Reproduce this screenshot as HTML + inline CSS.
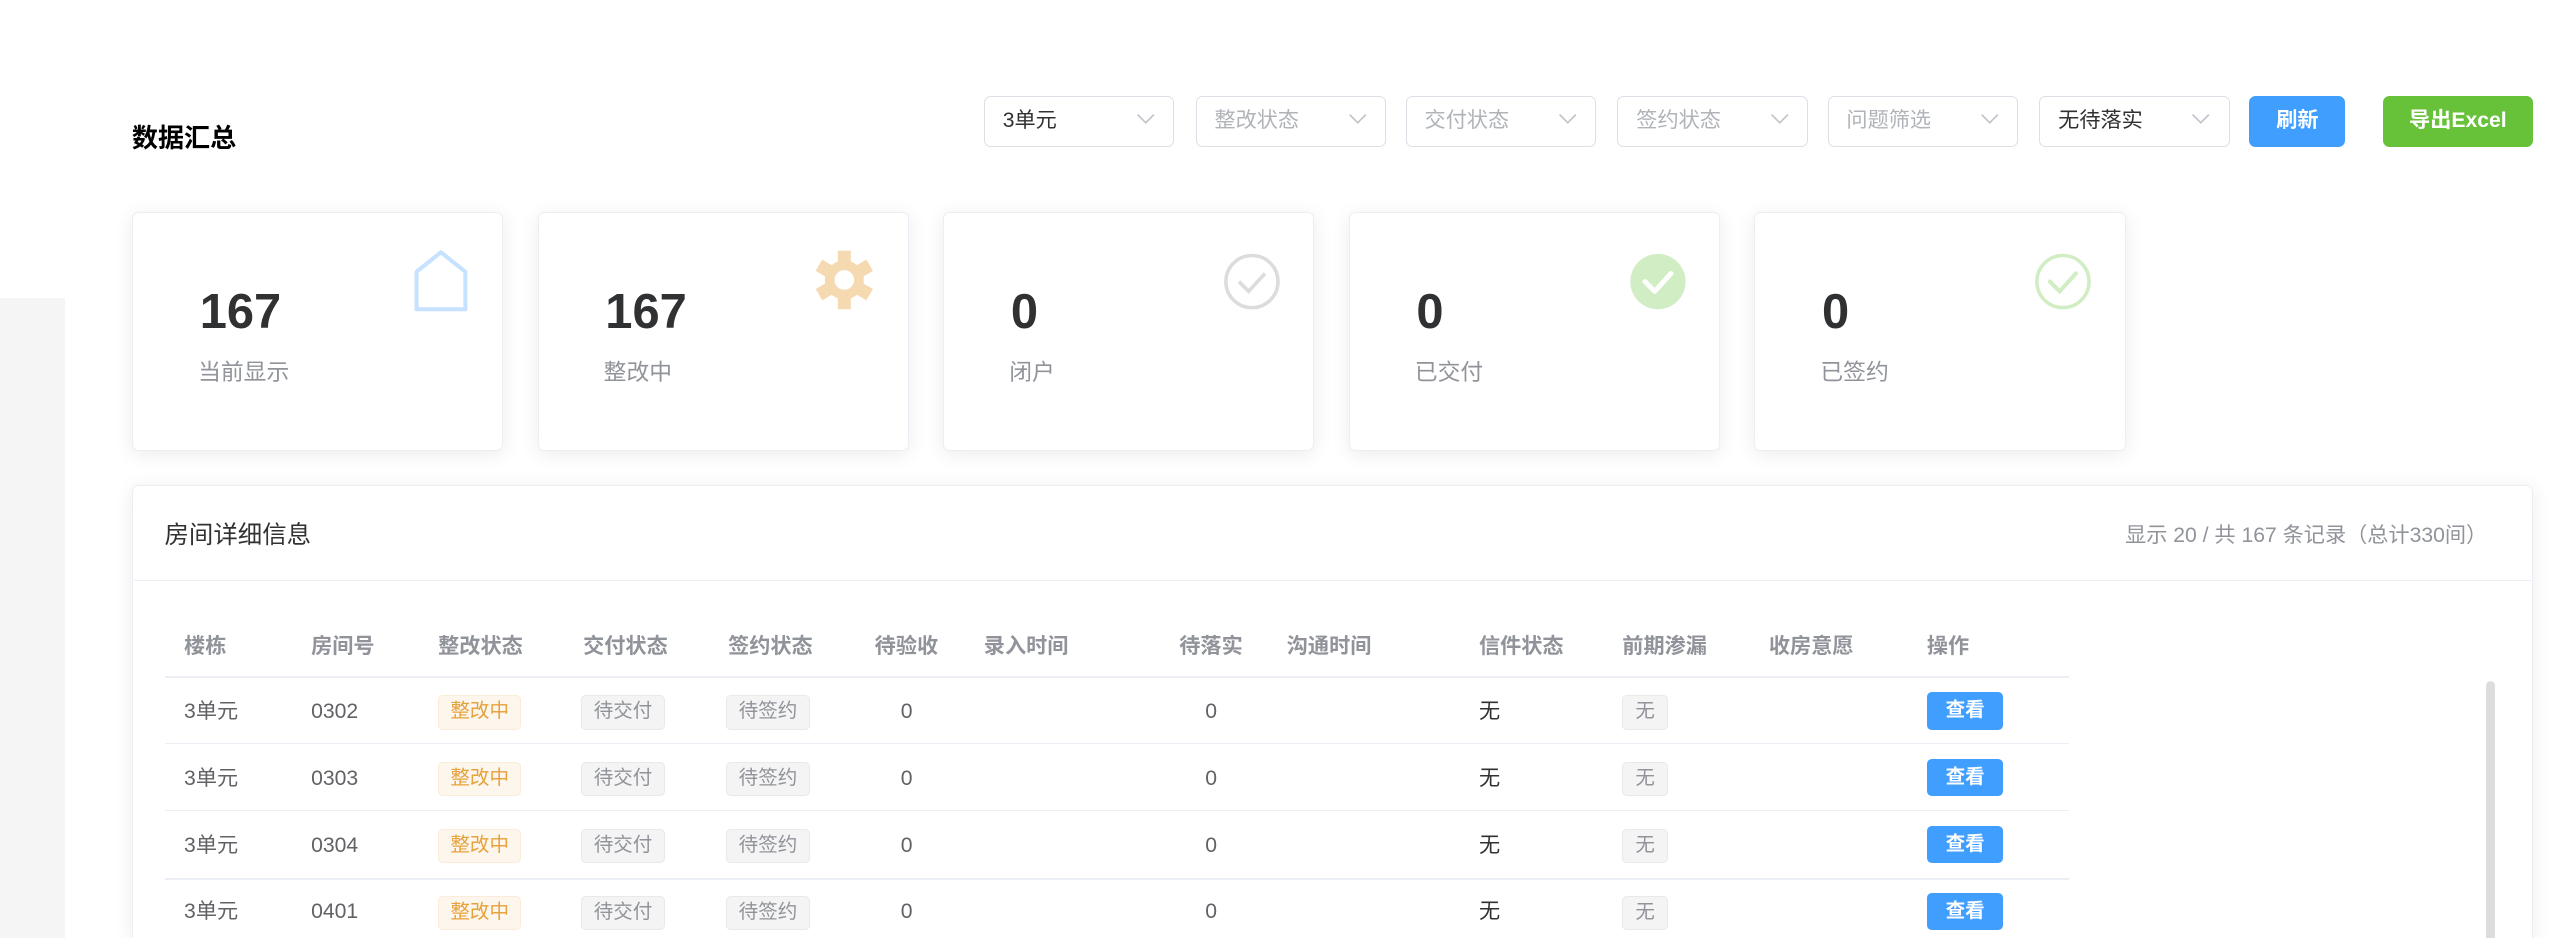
<!DOCTYPE html>
<html><head><meta charset="utf-8">
<style>
*{margin:0;padding:0;box-sizing:border-box}
html,body{width:2554px;height:938px;overflow:hidden;background:#fff}
#w{zoom:1.6288;width:1568px;height:576px;position:relative;font-family:"Liberation Sans","Noto Sans CJK SC",sans-serif;color:#606266;overflow:hidden}
.a{position:absolute;line-height:18px}
.strip{left:0;top:183px;width:40px;height:393px;background:#f5f5f5}
.title{left:81px;top:76px;font-size:16px;font-weight:bold;color:#000}
.sel{top:59px;height:31px;width:117px;border:1px solid #dcdfe6;border-radius:4px;font-size:13px;color:#b0b3b8;padding-left:11px;line-height:29px}
.sel.v{color:#303133}
.sel svg{position:absolute;right:11px;top:10px}
.btn{top:59px;height:31px;border-radius:4px;color:#fff;font-size:13px;line-height:31px;text-align:center;font-weight:bold}
.card{top:130px;width:228px;height:147px;border:1px solid #ebeef5;border-radius:4px;background:#fff;box-shadow:0 2px 12px rgba(0,0,0,.08)}
.num{position:absolute;left:41px;top:43px;font-size:30px;line-height:36px;font-weight:bold;color:#303133}
.lbl{position:absolute;left:40px;top:89px;font-size:14px;line-height:18px;color:#909399}
.card svg{position:absolute;left:170px;top:22px}
.panel{left:81px;top:298px;width:1474px;height:278px;border:1px solid #ebeef5;border-bottom:0;border-radius:4px 4px 0 0;box-shadow:0 2px 12px rgba(0,0,0,.08);background:#fff}
.ph{left:101px;top:320px;font-size:15px;color:#303133}
.pr{right:41px;top:320px;font-size:13px;color:#909399}
.div{left:82px;top:356px;width:1472px;height:1px;background:#ebeef5}
.th{top:388px;font-size:13px;font-weight:bold;color:#909399}
.td{font-size:13px;color:#606266}
.line{left:101px;width:1169px;height:1px;background:#ebeef5}
.tag{height:21px;border-radius:3px;font-size:12px;line-height:19px;text-align:center;border:1px solid}
.t1{width:51px;background:#fdf6ec;border-color:#faecd8;color:#e6a23c}
.t2{width:51px;background:#f4f4f5;border-color:#e9e9eb;color:#909399}
.t3{width:28px;background:#f4f4f5;border-color:#e9e9eb;color:#909399}
.vb{width:47px;height:23px;border-radius:3px;background:#409eff;color:#fff;font-size:12px;line-height:23px;text-align:center;font-weight:bold}
.sb{left:1526px;top:418px;width:6px;height:160px;background:#ddd;border-radius:3px}
</style></head><body><div id="w">
<div class="a strip"></div>
<div class="a title">数据汇总</div>

<div class="a sel v" style="left:604px">3单元<svg width="12" height="8" viewBox="0 0 12 8"><path d="M1 1l5 5 5-5" fill="none" stroke="#c0c4cc" stroke-width="1"/></svg></div>
<div class="a sel" style="left:734px">整改状态<svg width="12" height="8" viewBox="0 0 12 8"><path d="M1 1l5 5 5-5" fill="none" stroke="#c0c4cc" stroke-width="1"/></svg></div>
<div class="a sel" style="left:863px">交付状态<svg width="12" height="8" viewBox="0 0 12 8"><path d="M1 1l5 5 5-5" fill="none" stroke="#c0c4cc" stroke-width="1"/></svg></div>
<div class="a sel" style="left:993px">签约状态<svg width="12" height="8" viewBox="0 0 12 8"><path d="M1 1l5 5 5-5" fill="none" stroke="#c0c4cc" stroke-width="1"/></svg></div>
<div class="a sel" style="left:1122px">问题筛选<svg width="12" height="8" viewBox="0 0 12 8"><path d="M1 1l5 5 5-5" fill="none" stroke="#c0c4cc" stroke-width="1"/></svg></div>
<div class="a sel v" style="left:1252px">无待落实<svg width="12" height="8" viewBox="0 0 12 8"><path d="M1 1l5 5 5-5" fill="none" stroke="#c0c4cc" stroke-width="1"/></svg></div>
<div class="a btn" style="left:1381px;width:59px;background:#409eff">刷新</div>
<div class="a btn" style="left:1463px;width:92px;background:#67c23a">导出Excel</div>

<div class="a card" style="left:81px"><div class="num">167</div><div class="lbl">当前显示</div>
<svg width="40" height="40" viewBox="0 0 40 40"><path d="M4 37 V14 L19 2 L34 14 V37 Z" fill="none" stroke="#c6e2ff" stroke-width="2.5" stroke-linejoin="round"/></svg></div>
<div class="a card" style="left:330px"><div class="num">167</div><div class="lbl">整改中</div>
<svg width="40" height="40" viewBox="0 0 40 40"><g fill="#f5dab1" transform="translate(18,19)"><circle r="12"/><g id="t"><rect x="-4" y="-18" width="8" height="8"/></g><use href="#t" transform="rotate(60)"/><use href="#t" transform="rotate(120)"/><use href="#t" transform="rotate(180)"/><use href="#t" transform="rotate(240)"/><use href="#t" transform="rotate(300)"/><circle r="6" fill="#fff"/></g></svg></div>
<div class="a card" style="left:579px"><div class="num">0</div><div class="lbl">闭户</div>
<svg width="40" height="40" viewBox="0 0 40 40"><circle cx="19" cy="20" r="16" fill="none" stroke="#dcdcdc" stroke-width="2.2"/><path d="M11 20l6 6 10-11" fill="none" stroke="#dcdcdc" stroke-width="2.2"/></svg></div>
<div class="a card" style="left:828px"><div class="num">0</div><div class="lbl">已交付</div>
<svg width="40" height="40" viewBox="0 0 40 40"><circle cx="19" cy="20" r="17" fill="#d1edc4"/><path d="M11 20l6 6 10-11" fill="none" stroke="#fff" stroke-width="3" stroke-linecap="round" stroke-linejoin="round"/></svg></div>
<div class="a card" style="left:1077px"><div class="num">0</div><div class="lbl">已签约</div>
<svg width="40" height="40" viewBox="0 0 40 40"><circle cx="19" cy="20" r="16" fill="none" stroke="#d1edc4" stroke-width="2.2"/><path d="M11 20l6 6 10-11" fill="none" stroke="#d1edc4" stroke-width="2.5" stroke-linecap="round"/></svg></div>

<div class="a panel"></div>
<div class="a ph">房间详细信息</div>
<div class="a pr">显示 20 / 共 167 条记录（总计330间）</div>
<div class="a div"></div>

<div class="a th" style="left:113px">楼栋</div>
<div class="a th" style="left:191px">房间号</div>
<div class="a th" style="left:269px">整改状态</div>
<div class="a th" style="left:358px">交付状态</div>
<div class="a th" style="left:447px">签约状态</div>
<div class="a th" style="left:537px">待验收</div>
<div class="a th" style="left:604px">录入时间</div>
<div class="a th" style="left:724px">待落实</div>
<div class="a th" style="left:790px">沟通时间</div>
<div class="a th" style="left:908px">信件状态</div>
<div class="a th" style="left:996px">前期渗漏</div>
<div class="a th" style="left:1086px">收房意愿</div>
<div class="a th" style="left:1183px">操作</div>
<div class="a line" style="top:415px"></div>

<div class="a td" style="left:113px;top:428px">3单元</div><div class="a td" style="left:191px;top:428px">0302</div>
<div class="a tag t1" style="left:269px;top:427px">整改中</div><div class="a tag t2" style="left:357px;top:427px">待交付</div><div class="a tag t2" style="left:446px;top:427px">待签约</div>
<div class="a td" style="left:553px;top:428px">0</div><div class="a td" style="left:740px;top:428px">0</div><div class="a td" style="left:908px;top:428px;color:#303133">无</div>
<div class="a tag t3" style="left:996px;top:427px">无</div><div class="a vb" style="left:1183px;top:425px">查看</div>
<div class="a line" style="top:456px"></div>

<div class="a td" style="left:113px;top:469px">3单元</div><div class="a td" style="left:191px;top:469px">0303</div>
<div class="a tag t1" style="left:269px;top:468px">整改中</div><div class="a tag t2" style="left:357px;top:468px">待交付</div><div class="a tag t2" style="left:446px;top:468px">待签约</div>
<div class="a td" style="left:553px;top:469px">0</div><div class="a td" style="left:740px;top:469px">0</div><div class="a td" style="left:908px;top:469px;color:#303133">无</div>
<div class="a tag t3" style="left:996px;top:468px">无</div><div class="a vb" style="left:1183px;top:466px">查看</div>
<div class="a line" style="top:497px"></div>

<div class="a td" style="left:113px;top:510px">3单元</div><div class="a td" style="left:191px;top:510px">0304</div>
<div class="a tag t1" style="left:269px;top:509px">整改中</div><div class="a tag t2" style="left:357px;top:509px">待交付</div><div class="a tag t2" style="left:446px;top:509px">待签约</div>
<div class="a td" style="left:553px;top:510px">0</div><div class="a td" style="left:740px;top:510px">0</div><div class="a td" style="left:908px;top:510px;color:#303133">无</div>
<div class="a tag t3" style="left:996px;top:509px">无</div><div class="a vb" style="left:1183px;top:507px">查看</div>
<div class="a line" style="top:539px"></div>

<div class="a td" style="left:113px;top:551px">3单元</div><div class="a td" style="left:191px;top:551px">0401</div>
<div class="a tag t1" style="left:269px;top:550px">整改中</div><div class="a tag t2" style="left:357px;top:550px">待交付</div><div class="a tag t2" style="left:446px;top:550px">待签约</div>
<div class="a td" style="left:553px;top:551px">0</div><div class="a td" style="left:740px;top:551px">0</div><div class="a td" style="left:908px;top:551px;color:#303133">无</div>
<div class="a tag t3" style="left:996px;top:550px">无</div><div class="a vb" style="left:1183px;top:548px">查看</div>

<div class="a sb"></div>
</div></body></html>
